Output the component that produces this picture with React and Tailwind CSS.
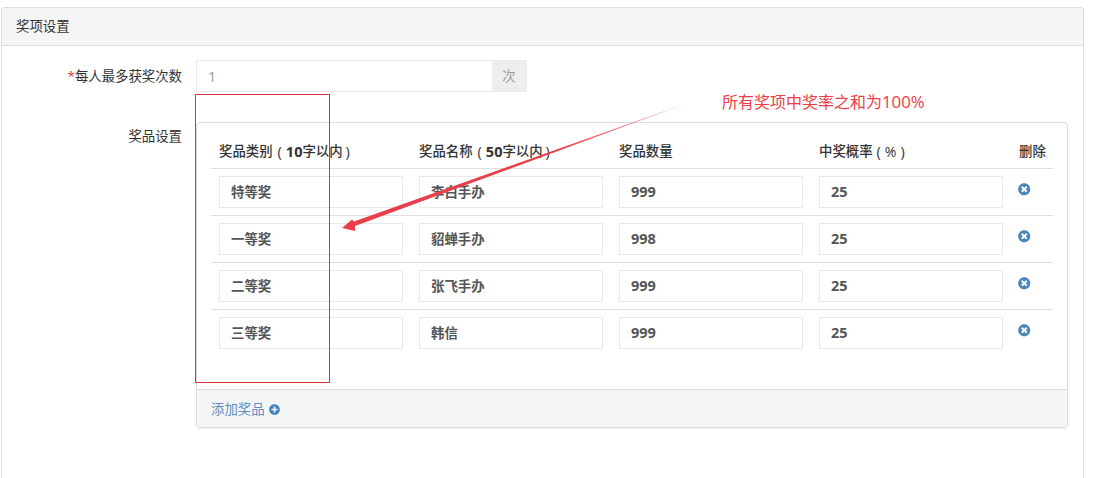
import React from "react";
import { FaTimesCircle, FaPlusCircle } from "react-icons/fa";

const rows = [
  ["特等奖", "李白手办", "999", "25"],
  ["一等奖", "貂蝉手办", "998", "25"],
  ["二等奖", "张飞手办", "999", "25"],
  ["三等奖", "韩信", "999", "25"],
];

const font = "font-['Open_Sans','Noto_Sans_CJK_SC',sans-serif]";
const grid = "grid grid-cols-[200px_200px_200px_200px_42px]";

function Cell({ value }) {
  const isNum = /^\d+$/.test(value);
  return (
    <div className="px-2">
      <div className={`flex h-8 w-[184px] items-center border border-[#e9e9e9] bg-white pl-[11px] text-[#555] ${isNum ? "text-[14.5px] font-bold" : "text-[13.4px] font-semibold"}`}>
        {value}
      </div>
    </div>
  );
}

function Head({ name, num, rest }) {
  return (
    <div className="flex items-center whitespace-pre pl-2">
      {name}
      <span className="pl-[5px] pr-[4px] text-[14.5px] font-normal">(</span>
      <span className="text-[14.5px] font-bold">{num}</span>
      {rest}
      <span className="pl-[3px] text-[14.5px] font-normal">)</span>
    </div>
  );
}

export default function App() {
  return (
    <div className={`relative h-[478px] w-[1106px] overflow-hidden bg-white ${font}`}>
      <div className="ml-px mt-[7px] h-[520px] w-[1083px] rounded-t-[3px] border border-[#dddddd] bg-white">
        <div className="flex h-[38px] items-center border-b border-[#dddddd] bg-[#f5f5f5] pl-[14px] text-[13.4px] text-[#333]">
          奖项设置
        </div>
        <div className="flex pt-[14px]">
          <div className="w-[180px] pt-[6px] text-right text-[13.4px] leading-5 text-[#333]">
            <span className="text-[#e33]">*</span>每人最多获奖次数
          </div>
          <div className="ml-[14px] flex h-8 w-[331px] border border-[#e9e9e9]">
            <div className="flex-1 pl-[11px] text-[14.5px] leading-[31px] text-[#999]">1</div>
            <div className="flex w-[34px] items-center justify-center bg-[#eeeeee] text-[13.4px] text-[#999]">次</div>
          </div>
        </div>
        <div className="flex pt-[30px]">
          <div className="w-[180px] pt-[4px] text-right text-[13.4px] leading-5 text-[#333]">奖品设置</div>
          <div className="ml-[14px] w-[872px] overflow-hidden rounded-[4px] border border-[#dddddd] shadow-[0_1px_2px_rgba(0,0,0,0.08)]">
            <div className="h-[266px] pl-[14px] pt-[13px]">
              <div className={`${grid} h-[33px] w-[842px] items-center border-b border-[#dddddd] pb-px text-[13.4px] font-medium text-[#333]`}>
                <Head name="奖品类别" num="10" rest="字以内" />
                <Head name="奖品名称" num="50" rest="字以内" />
                <div className="pl-2">奖品数量</div>
                <div className="flex items-center whitespace-pre pl-2">
                  中奖概率
                  <span className="px-[4px] text-[14.5px] font-normal">(</span>
                  <span className="text-[14px] font-normal">%</span>
                  <span className="px-[4px] text-[14.5px] font-normal">)</span>
                </div>
                <div className="pl-2">删除</div>
              </div>
              {rows.map((r, i) => (
                <div key={i} className={`${grid} h-[47px] w-[842px] items-start pt-[7px] ${i < 3 ? "border-b border-[#dddddd]" : ""}`}>
                  {r.map((v, j) => <Cell key={j} value={v} />)}
                  <div className="pl-[7px] pt-[7px] text-[12.5px] text-[#4c86b9]"><FaTimesCircle /></div>
                </div>
              ))}
            </div>
            <div className="flex h-[38px] items-center gap-[4px] border-t border-[#dddddd] bg-[#f5f5f5] pl-[14px] pt-px text-[13.4px] text-[#5b8fbe]">
              添加奖品 <FaPlusCircle className="text-[11px] text-[#3d80c4]" />
            </div>
          </div>
        </div>
      </div>

      <div className="absolute left-[195px] top-[94px] h-[289px] w-[135px] border border-[#d9343a]" />
      <div className="absolute left-[722px] top-[90px] text-[16px] leading-6 text-[#ee3d48]">所有奖项中奖率之和为<span className="text-[16.8px]">100%</span></div>
      <svg className="absolute left-0 top-0" width="1106" height="478">
        <defs>
          <linearGradient id="tail" gradientUnits="userSpaceOnUse" x1="693" y1="101" x2="560" y2="149">
            <stop offset="0" stopColor="#ee3d48" stopOpacity="0.3" />
            <stop offset="1" stopColor="#e8404a" />
          </linearGradient>
        </defs>
        <polygon points="693,101 354,221.5 352,219.5 342,228 355,231 355,226" fill="url(#tail)" />
      </svg>
    </div>
  );
}
